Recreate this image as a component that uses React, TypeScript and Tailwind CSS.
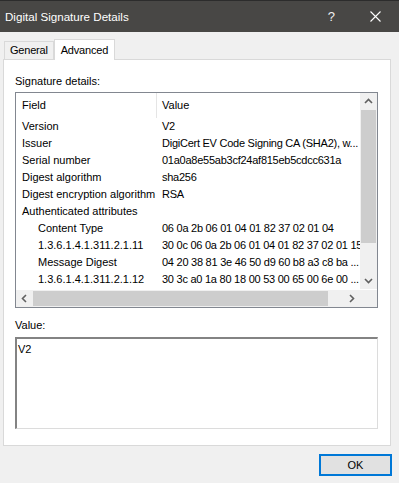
import React from 'react'

const rows: [string, string, boolean][] = [
  ['Version', 'V2', false],
  ['Issuer', 'DigiCert EV Code Signing CA (SHA2), w...', false],
  ['Serial number', '01a0a8e55ab3cf24af815eb5cdcc631a', false],
  ['Digest algorithm', 'sha256', false],
  ['Digest encryption algorithm', 'RSA', false],
  ['Authenticated attributes', '', false],
  ['Content Type', '06 0a 2b 06 01 04 01 82 37 02 01 04', true],
  ['1.3.6.1.4.1.311.2.1.11', '30 0c 06 0a 2b 06 01 04 01 82 37 02 01 15', true],
  ['Message Digest', '04 20 38 81 3e 46 50 d9 60 b8 a3 c8 ba ...', true],
  ['1.3.6.1.4.1.311.2.1.12', '30 3c a0 1a 80 18 00 53 00 65 00 6e 00 ...', true],
]

function Chevron({ dir }: { dir: 'up' | 'down' | 'left' | 'right' }) {
  const pts = {
    up: '1,6 4.5,2.5 8,6',
    down: '1,3 4.5,6.5 8,3',
    left: '6,1 2.5,4.5 6,8',
    right: '3,1 6.5,4.5 3,8',
  }[dir]
  return (
    <svg width="9" height="9" viewBox="0 0 9 9">
      <polyline points={pts} fill="none" stroke="#606060" strokeWidth="1.6" />
    </svg>
  )
}

export default function App() {
  return (
    <div
      className="w-[399px] h-[483px] bg-[#f0f0f0] flex flex-col text-[11px] text-black overflow-hidden"
      style={{ fontFamily: '"Liberation Sans", Arial, sans-serif' }}
    >
      {/* title bar */}
      <div className="h-[32px] bg-[#484745] border-t border-[#2c2c2c] flex items-center pl-[5px] text-white shrink-0">
        <span className="text-[11.6px]">Digital Signature Details</span>
        <span className="ml-auto mr-[35px] text-[13px] font-light text-[#f0f0f0]">?</span>
        <svg width="11" height="11" viewBox="0 0 11 11" className="mr-[18px]">
          <path d="M0.5 0.5 L10.5 10.5 M10.5 0.5 L0.5 10.5" stroke="#ffffff" strokeWidth="1.1" />
        </svg>
      </div>

      {/* tabs */}
      <div className="flex items-end h-[20px] mt-[7px] pl-[4px] relative z-10">
        <div className="h-[18px] px-[5px] border border-b-0 border-[#d9d9d9] bg-[#f0f0f0] flex items-center tracking-[-0.2px]">
          General
        </div>
        <div className="h-[21px] px-[6px] border border-b-0 border-[#d9d9d9] bg-white flex items-center -mb-px tracking-[-0.2px]">
          Advanced
        </div>
      </div>

      {/* panel */}
      <div className="mx-[3px] w-[388px] h-[387px] bg-white border border-[#d9d9d9] pt-[14px] pl-[11px] flex flex-col">
        <div className="h-[15px] leading-[15px]">Signature details:</div>

        <div className="mt-[3px] w-[363px] h-[216px] border border-[#828790] flex flex-col">
          <div className="flex h-[197px]">
            <div className="w-[344px] overflow-hidden">
              <div className="h-[25px] flex items-center">
                <div className="w-[141px] pl-[6px] h-full flex items-center border-r border-[#e5e5e5]">Field</div>
                <div className="pl-[5px]">Value</div>
              </div>
              {rows.map(([f, v, sub]) => (
                <div key={f} className="h-[17px] flex items-center whitespace-nowrap">
                  <div className={`w-[141px] shrink-0 overflow-hidden ${sub ? 'pl-[22px]' : 'pl-[6px]'}`}>{f}</div>
                  <div className="pl-[5px] shrink-0 tracking-[-0.25px]">{v}</div>
                </div>
              ))}
            </div>
            <div className="w-[17px] h-[196px] bg-[#f0f0f0] flex flex-col">
              <div className="h-[17px] flex items-center justify-center">
                <Chevron dir="up" />
              </div>
              <div className="h-[133px] mx-[1px] bg-[#cdcdcd]" />
              <div className="flex-1" />
              <div className="h-[17px] flex items-center justify-center">
                <Chevron dir="down" />
              </div>
            </div>
          </div>
          <div className="flex h-[17px] bg-[#f0f0f0]">
            <div className="w-[344px] flex items-center">
              <div className="w-[17px] h-full flex items-center justify-center">
                <Chevron dir="left" />
              </div>
              <div className="w-[295px] h-[15px] bg-[#cdcdcd]" />
              <div className="flex-1" />
              <div className="w-[17px] h-full flex items-center justify-center">
                <Chevron dir="right" />
              </div>
            </div>
            <div className="w-[17px]" />
          </div>
        </div>

        <div className="mt-[10px] h-[15px] leading-[15px]">Value:</div>
        <div className="mt-[4px] w-[363px] h-[92px] border-t-2 border-l-2 border-[#838383] border-r border-b border-r-[#dcdcdc] border-b-[#dcdcdc] pl-[1px] pt-[2px]">
          V2
        </div>
      </div>

      {/* footer */}
      <div className="flex justify-end pr-[7px] mt-[8px]">
        <button className="w-[73px] h-[22px] border-2 border-[#0078d7] bg-[#e1e1e1] text-[11px] flex items-center justify-center">
          OK
        </button>
      </div>
    </div>
  )
}
